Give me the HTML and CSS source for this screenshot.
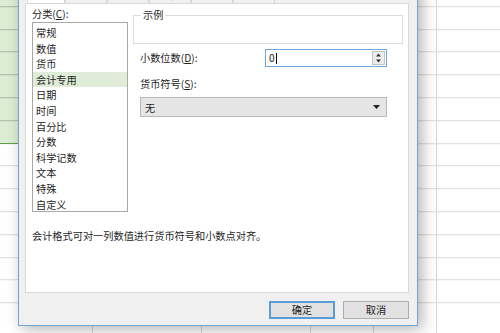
FILE: index.html
```html
<!DOCTYPE html>
<html lang="zh-CN">
<head>
<meta charset="utf-8">
<title>设置单元格格式</title>
<link rel="stylesheet" href="styles.css">
</head>
<body>
<div class="sheet">
  <div class="sel-col"></div>
</div>
<div class="dialog">
  <div class="tabs">
    <span class="tab active">数字</span><span class="tab">对齐</span><span class="tab">字体</span><span class="tab">边框</span><span class="tab">填充</span><span class="tab">保护</span>
  </div>
  <div class="page">
    <div class="cols">
      <div class="left">
        <div class="lbl">分类(<u>C</u>):</div>
        <ul class="list">
          <li>常规</li>
          <li>数值</li>
          <li>货币</li>
          <li class="sel">会计专用</li>
          <li>日期</li>
          <li>时间</li>
          <li>百分比</li>
          <li>分数</li>
          <li>科学记数</li>
          <li>文本</li>
          <li>特殊</li>
          <li>自定义</li>
        </ul>
      </div>
      <div class="right">
        <fieldset class="sample"><legend>示例</legend><div class="sample-body"></div></fieldset>
        <div class="row">
          <span class="lbl">小数位数(<u>D</u>):</span>
          <div class="spin">
            <span class="val">0</span><span class="caret"></span>
            <span class="spin-btn">
              <svg width="7" height="12" viewBox="0 0 7 12"><path d="M3.5 1.5 L6 4.5 L1 4.5 Z" fill="#333"/><path d="M1 7.5 L6 7.5 L3.5 10.5 Z" fill="#333"/></svg>
            </span>
          </div>
        </div>
        <div class="lbl lbl2">货币符号(<u>S</u>):</div>
        <div class="select"><span>无</span><svg width="7" height="4" viewBox="0 0 7 4"><path d="M0 0 L7 0 L3.5 4 Z" fill="#222"/></svg></div>
      </div>
    </div>
    <p class="desc">会计格式可对一列数值进行货币符号和小数点对齐。</p>
  </div>
  <div class="buttons">
    <button class="btn default">确定</button>
    <button class="btn">取消</button>
  </div>
</div>
</body>
</html>
```

FILE: styles.css
```css
html, body {
  margin: 0;
  padding: 0;
  width: 500px;
  height: 333px;
  overflow: hidden;
  background: #fff;
  font-family: "Noto Sans CJK SC", "Noto Sans", sans-serif;
}

.sheet {
  width: 500px;
  height: 333px;
  background-color: #fff;
  background-image:
    linear-gradient(#d6d6d6, #d6d6d6),
    linear-gradient(#d6d6d6, #d6d6d6),
    linear-gradient(#d6d6d6, #d6d6d6),
    linear-gradient(#d6d6d6, #d6d6d6),
    linear-gradient(#d6d6d6, #d6d6d6),
    repeating-linear-gradient(to bottom, transparent 0, transparent 21.8px, #dadada 21.8px, #dadada 22.8px);
  background-size: 1px 100%, 1px 100%, 1px 100%, 1px 100%, 1px 100%, 100% 100%;
  background-position: 92px 0, 201px 0, 310px 0, 373px 0, 436px 0, 0 -15.8px;
  background-repeat: no-repeat, no-repeat, no-repeat, no-repeat, no-repeat, repeat;
}

.sel-col {
  width: 18px;
  height: 143px;
  background-color: #dcedd4;
  background-image: repeating-linear-gradient(to bottom, transparent 0, transparent 21.8px, #a9b9a3 21.8px, #a9b9a3 22.8px);
  background-position: 0 -15.8px;
  border-bottom: 1px solid #5e9e4c;
}

.dialog {
  position: absolute;
  left: 18px;
  top: -16px;
  width: 400px;
  height: 342px;
  box-sizing: border-box;
  border: 1px solid #6ea4d6;
  background: #f0f0f0;
  padding: 0 8px 6px 6px;
  box-shadow: 4px 3px 14px rgba(0, 0, 0, 0.3);
  display: flex;
  flex-direction: column;
  color: #1e1e1e;
  font-size: 10.2px;
}

.tabs {
  height: 18px;
  display: flex;
  align-items: flex-end;
  padding-left: 2px;
}

.tab {
  width: 42px;
  height: 16px;
  line-height: 14px;
  text-align: center;
  box-sizing: border-box;
  border: 1px solid #d9d9d9;
  border-bottom: none;
  background: #f0f0f0;
  color: #333;
}

.tab.active {
  width: 38px;
  height: 18px;
  background: #fff;
}

.page {
  height: 290px;
  box-sizing: border-box;
  background: #fff;
  border: 1px solid #d9d9d9;
  padding: 3px 5px 0 6px;
}

.cols {
  display: grid;
  grid-template-columns: 96px 1fr;
  column-gap: 5px;
}

.lbl {
  line-height: 14px;
  white-space: nowrap;
}

.list {
  list-style: none;
  margin: 1px 0 0;
  padding: 2px 0 0;
  height: 190px;
  box-sizing: border-box;
  border: 1px solid #a8a8a8;
}

.list li {
  line-height: 15.6px;
  padding-left: 3px;
  white-space: nowrap;
}

.list li.sel {
  background: #dfecd8;
}

.right {
  display: flex;
  flex-direction: column;
}

.sample {
  margin: 1px 0 0;
  padding: 0 7px;
  border: 1px solid #dcdcdc;
  min-inline-size: 0;
}

.sample legend {
  padding: 0 2px;
  line-height: 14px;
}

.sample-body {
  height: 21px;
}

.row {
  margin-top: 5px;
  height: 18px;
  display: flex;
  align-items: center;
  padding-left: 7px;
}

.spin {
  margin-left: auto;
  margin-right: 16px;
  width: 122px;
  height: 18px;
  box-sizing: border-box;
  border: 1px solid #6fa8dc;
  display: flex;
  align-items: center;
  padding-left: 3px;
  padding-right: 1px;
}

.val {
  line-height: 14px;
}

.caret {
  width: 1px;
  height: 11px;
  background: #111;
  margin-left: 1px;
}

.spin-btn {
  margin-left: auto;
  width: 13px;
  height: 14px;
  box-sizing: border-box;
  border: 1px solid #c4c4c4;
  background: #ececec;
  display: flex;
  align-items: center;
  justify-content: center;
}

.spin-btn svg {
  display: block;
}

.lbl2 {
  margin-top: 10px;
  padding-left: 7px;
}

.select {
  margin: 6px 16px 0 7px;
  height: 20px;
  box-sizing: border-box;
  border: 1px solid #b9b9b9;
  background: #e5e5e5;
  display: flex;
  align-items: center;
  justify-content: space-between;
  padding: 0 6px 0 4px;
}

.select svg {
  display: block;
}

.desc {
  margin: 17px 0 0;
  line-height: 14px;
  white-space: nowrap;
}

.buttons {
  margin-top: 8px;
  display: flex;
  justify-content: flex-end;
  gap: 8px;
}

.btn {
  width: 66px;
  height: 18px;
  box-sizing: border-box;
  border: 1px solid #adadad;
  background: #e1e1e1;
  font-family: inherit;
  font-size: 10.2px;
  color: #1e1e1e;
  padding: 0;
  line-height: 14px;
}

.btn.default {
  border: 2px solid #5a9bd8;
}
```
